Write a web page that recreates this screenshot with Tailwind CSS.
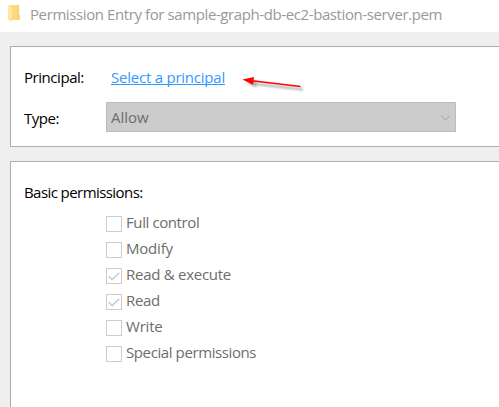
<!DOCTYPE html>
<html lang="en">
<head>
<meta charset="utf-8">
<title>Permission Entry</title>
<script src="https://cdn.jsdelivr.net/npm/@tailwindcss/browser@4"></script>
</head>
<body class="w-[499px] h-[407px] overflow-hidden bg-[#efefef] font-['Open_Sans','Noto_Sans',sans-serif] text-[15px] leading-5 whitespace-nowrap text-black flex flex-col">
  <header class="h-8 shrink-0 bg-white flex items-start pl-2 text-[#999]">
    <svg class="mt-[4px] w-[13px] h-[19px] shrink-0" viewBox="0 0 13 19">
      <path d="M2 1H11V11H12V16H3Z" fill="#f9da80"/>
      <path d="M9 1H11V11H12V16H9Z" fill="#f6d571"/>
      <path d="M0 1L4 3V18L0 16Z" fill="#ffe79f"/>
    </svg>
    <h1 class="ml-[9px] mt-[4px] tracking-[-0.4px]">Permission Entry for sample-graph-db-ec2-bastion-server.pem</h1>
  </header>

  <section class="relative mt-[14px] ml-[10px] h-[101px] shrink-0 border border-r-0 border-[#adadad] bg-white pl-[13px] pt-[20px]">
    <div class="flex h-5">
      <span class="w-[87px] tracking-[-0.45px]">Principal:</span>
      <a class="h-[18px] border-b border-[#3399ff] text-[#3399ff] tracking-[-0.23px]">Select a principal</a>
    </div>
    <div class="flex mt-[15px]">
      <span class="w-[82px] mt-[6px] tracking-[-0.5px]">Type:</span>
      <div class="flex w-[350px] h-[30px] items-start justify-between border border-[#bcbcbc] bg-[#ccc] pl-1 pr-[4px] pt-[4px] text-[#6d6d6d]">
        <span class="tracking-[0px]">Allow</span>
        <svg class="mt-[7px] w-[11px] h-[8px]" viewBox="0 0 11 8" fill="none" stroke="#a0a0a0"><path d="M1 1.5L5.5 6L10 1.5"/></svg>
      </div>
    </div>
    <svg class="absolute left-[230px] top-[26px] w-[66px] h-[24px] overflow-visible" viewBox="241 73 66 24">
      <defs><filter id="soft" x="-20%" y="-50%" width="140%" height="200%"><feGaussianBlur stdDeviation="1"/></filter></defs>
      <g transform="translate(3 3)" filter="url(#soft)" fill="#777" stroke="#777" opacity=".6"><path d="M243 79.5L254 77.2L253 84.4Z" stroke="none"/><path d="M252 81L300 86.5" stroke-width="1.8"/></g>
      <path d="M242.5 79.5L254 77L253 84.7Z" fill="#f00"/>
      <path d="M252 80.8L300.5 86.5" stroke="#f00" stroke-width="1.6"/>
    </svg>
  </section>

  <section class="mt-[14px] ml-[10px] h-[260px] shrink-0 border border-r-0 border-[#adadad] bg-white pl-[13px] pt-[20px]">
    <h2 class="tracking-[-0.57px]">Basic permissions:</h2>
    <ul class="ml-[82px] mt-[10px] text-[#6d6d6d]">
      <li class="flex h-[26px]"><i class="mt-[4px] mr-[4px] size-4 border border-[#ccc]"></i><span class="tracking-[-0.4px]">Full control</span></li>
      <li class="flex h-[26px]"><i class="mt-[4px] mr-[4px] size-4 border border-[#ccc]"></i><span class="tracking-[-0.2px]">Modify</span></li>
      <li class="flex h-[26px]"><i class="mt-[4px] mr-[4px] size-4 border border-[#ccc]"><svg viewBox="0 0 14 14" class="size-[14px]" fill="none" stroke="#ccc" stroke-width="1.6"><path d="M1.8 7.2L5.2 10.6L12.3 3.7"/></svg></i><span class="tracking-[-0.27px]">Read &amp; execute</span></li>
      <li class="flex h-[26px]"><i class="mt-[4px] mr-[4px] size-4 border border-[#ccc]"><svg viewBox="0 0 14 14" class="size-[14px]" fill="none" stroke="#ccc" stroke-width="1.6"><path d="M1.8 7.2L5.2 10.6L12.3 3.7"/></svg></i><span class="tracking-[-0.35px]">Read</span></li>
      <li class="flex h-[26px]"><i class="mt-[4px] mr-[4px] size-4 border border-[#ccc]"></i><span class="tracking-[-0.2px]">Write</span></li>
      <li class="flex h-[26px]"><i class="mt-[4px] mr-[4px] size-4 border border-[#ccc]"></i><span class="tracking-[-0.4px]">Special permissions</span></li>
    </ul>
  </section>
</body>
</html>
